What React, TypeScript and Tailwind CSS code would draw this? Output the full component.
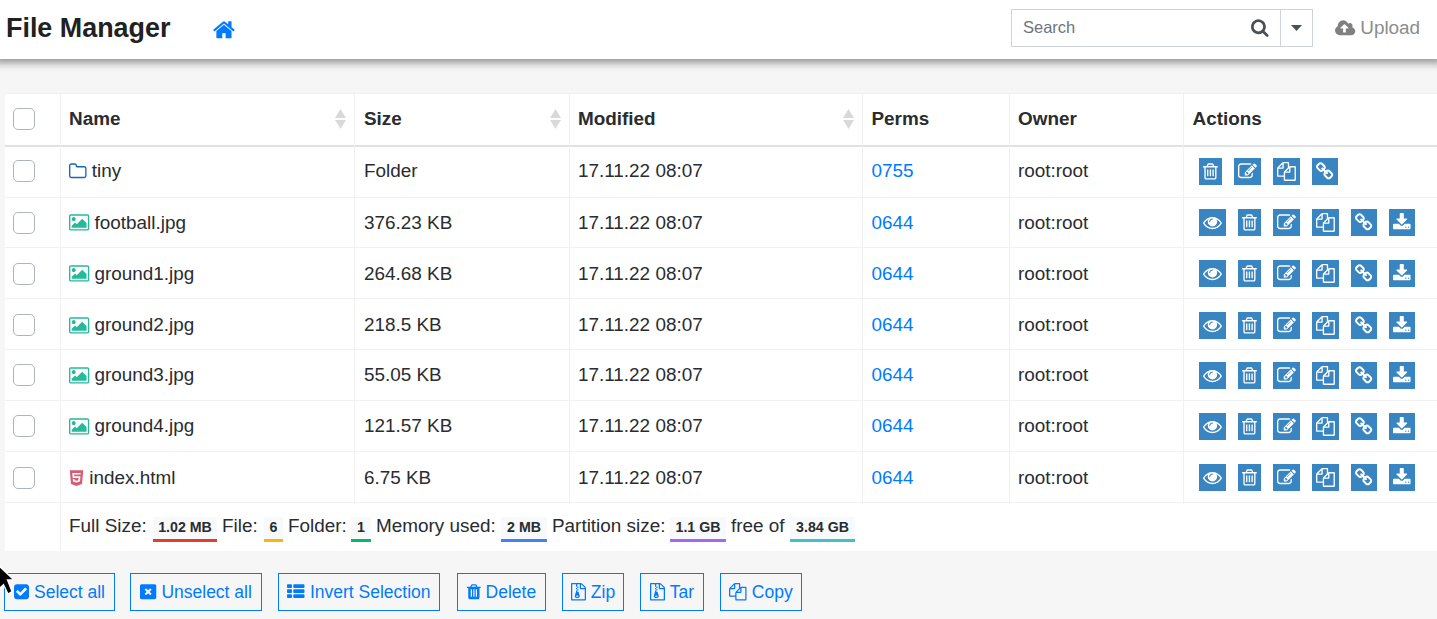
import { ReactNode } from "react";
import { FaHtml5 } from "react-icons/fa";

const TRASH_TOP =
  "M672 384h448l-48-117q-7-9-17-11h-317q-10 2-17 11zm928 32v64q0 14-9 23t-23 9h-96v948q0 83-47 143.5t-113 60.5h-832q-66 0-113-58.5t-47-141.5v-952h-96q-14 0-23-9t-9-23v-64q0-14 9-23t23-9h309l70-167q15-37 54-63t79-26h320q40 0 79 26t54 63l70 167h309q14 0 23 9t9 23z";

const glyphs = {
  home: "M1472 992v480q0 26-19 45t-45 19h-384v-384h-256v384h-384q-26 0-45-19t-19-45v-480q0-1 .5-3t.5-3l575-474 575 474q1 2 1 6zm223-69l-62 74q-8 9-21 11h-3q-13 0-21-7l-692-577-692 577q-12 8-24 7-13-2-21-11l-62-74q-8-10-7-23.5t11-21.5l719-599q32-26 76-26t76 26l244 204v-195q0-14 9-23t23-9h192q14 0 23 9t9 23v408l219 182q10 8 11 21.5t-7 23.5z",
  search:
    "M1216 832q0-185-131.5-316.5t-316.5-131.5-316.5 131.5-131.5 316.5 131.5 316.5 316.5 131.5 316.5-131.5 131.5-316.5zm512 832q0 52-38 90t-90 38q-54 0-90-38l-343-342q-179 124-399 124-143 0-273.5-55.5t-225-150-150-225-55.5-273.5 55.5-273.5 150-225 225-150 273.5-55.5 273.5 55.5 225 150 150 225 55.5 273.5q0 220-124 399l343 343q37 37 37 90z",
  cloud:
    "M1216 864q0-14-9-23l-352-352q-9-9-23-9t-23 9l-351 351q-10 12-10 24 0 14 9 23t23 9h224v352q0 13 9.5 22.5t22.5 9.5h192q13 0 22.5-9.5t9.5-22.5v-352h224q13 0 22.5-9.5t9.5-22.5zm640 288q0 159-112.5 271.5t-271.5 112.5h-1088q-185 0-316.5-131.5t-131.5-316.5q0-130 70-240t188-165q-2-30-2-43 0-212 150-362t362-150q156 0 285.5 87t188.5 231q71-62 166-62 106 0 181 75t75 181q0 76-41 138 130 31 213.5 135.5t83.5 238.5z",
  trashO:
    "M704 736v576q0 14-9 23t-23 9h-64q-14 0-23-9t-9-23v-576q0-14 9-23t23-9h64q14 0 23 9t9 23zm256 0v576q0 14-9 23t-23 9h-64q-14 0-23-9t-9-23v-576q0-14 9-23t23-9h64q14 0 23 9t9 23zm256 0v576q0 14-9 23t-23 9h-64q-14 0-23-9t-9-23v-576q0-14 9-23t23-9h64q14 0 23 9t9 23zm128 724v-948h-896v948q0 22 7 40.5t14.5 27 10.5 8.5h832q3 0 10.5-8.5t14.5-27 7-40.5z" +
    TRASH_TOP,
  trash:
    "M704 1376v-704q0-14-9-23t-23-9h-64q-14 0-23 9t-9 23v704q0 14 9 23t23 9h64q14 0 23-9t9-23zm256 0v-704q0-14-9-23t-23-9h-64q-14 0-23 9t-9 23v704q0 14 9 23t23 9h64q14 0 23-9t9-23zm256 0v-704q0-14-9-23t-23-9h-64q-14 0-23 9t-9 23v704q0 14 9 23t23 9h64q14 0 23-9t9-23z" +
    TRASH_TOP,
  edit: "M888 1184l116-116-152-152-116 116v56h96v96h56zm440-720q-16-16-33 1l-350 350q-17 17-1 33t33-1l350-350q17-17 1-33zm80 594v190q0 119-84.5 203.5t-203.5 84.5h-832q-119 0-203.5-84.5t-84.5-203.5v-832q0-119 84.5-203.5t203.5-84.5h832q63 0 117 25 15 7 18 23 3 17-9 29l-49 49q-14 14-32 8-23-6-45-6h-832q-66 0-113 47t-47 113v832q0 66 47 113t113 47h832q66 0 113-47t47-113v-126q0-13 9-22l64-64q15-15 35-7t20 29zm-96-738l288 288-672 672h-288v-288zm444 132l-92 92-288-288 92-92q28-28 68-28t68 28l152 152q28 28 28 68t-28 68z",
  copy: "M1696 384q40 0 68 28t28 68v1216q0 40-28 68t-68 28h-960q-40 0-68-28t-28-68v-288h-544q-40 0-68-28t-28-68v-672q0-40 20-88t48-76l408-408q28-28 76-48t88-20h416q40 0 68 28t28 68v328q68-40 128-40h416zm-544 213l-299 299h299v-299zm-640-384l-299 299h299v-299zm196 647l316-316v-416h-384v416q0 40-28 68t-68 28h-416v640h512v-256q0-40 20-88t48-76zm956 804v-1152h-384v416q0 40-28 68t-68 28h-416v640h896z",
  link: "M1520 1216q0-40-28-68l-208-208q-28-28-68-28-42 0-72 32 3 3 19 18.5t21.5 21.5 15 19 13 25.5 3.5 27.5q0 40-28 68t-68 28q-15 0-27.5-3.5t-25.5-13-19-15-21.5-21.5-18.5-19q-33 31-33 73 0 40 28 68l206 207q27 27 68 27 40 0 68-26l147-146q28-28 28-67zm-703-705q0-40-28-68l-206-207q-28-28-68-28-39 0-68 27l-147 146q-28 28-28 67 0 40 28 68l208 208q27 27 68 27 42 0 72-31-3-3-19-18.5t-21.5-21.5-15-19-13-25.5-3.5-27.5q0-40 28-68t68-28q15 0 27.5 3.5t25.5 13 19 15 21.5 21.5 18.5 19q33-31 33-73zm895 705q0 120-85 203l-147 146q-83 83-203 83-121 0-204-85l-206-207q-83-83-83-203 0-123 88-209l-88-88q-86 88-208 88-120 0-204-84l-208-208q-84-84-84-204t85-203l147-146q83-83 203-83 121 0 204 85l206 207q83 83 83 203 0 123-88 209l88 88q86-88 208-88 120 0 204 84l208 208q84 84 84 204z",
  download:
    "M1344 1344q0-26-19-45t-45-19-45 19-19 45 19 45 45 19 45-19 19-45zm256 0q0-26-19-45t-45-19-45 19-19 45 19 45 45 19 45-19 19-45zm128-224v320q0 40-28 68t-68 28h-1472q-40 0-68-28t-28-68v-320q0-40 28-68t68-28h465l135 136q58 56 136 56t136-56l136-136h464q40 0 68 28t28 68zm-325-569q17 41-14 70l-448 448q-18 19-45 19t-45-19l-448-448q-31-29-14-70 17-39 59-39h256v-448q0-26 19-45t45-19h256q26 0 45 19t19 45v448h256q42 0 59 39z",
  eye: "M1664 960q-152-236-381-353 61 104 61 225 0 185-131.5 316.5t-316.5 131.5-316.5-131.5-131.5-316.5q0-121 61-225-229 117-381 353 133 205 333.5 326.5t434.5 121.5 434.5-121.5 333.5-326.5zm-720-384q0-20-14-34t-34-14q-125 0-214.5 89.5t-89.5 214.5q0 20 14 34t34 14 34-14 14-34q0-86 61-147t147-61q20 0 34-14t14-34zm848 384q0 34-20 69-140 230-376.5 368.5t-499.5 138.5-499.5-139-376.5-368q-20-35-20-69t20-69q140-229 376.5-368t499.5-139 499.5 139 376.5 368q20 35 20 69z",
  folder:
    "M1600 1312v-704q0-40-28-68t-68-28h-704q-40 0-68-28t-28-68v-64q0-40-28-68t-68-28h-320q-40 0-68 28t-28 68v960q0 40 28 68t68 28h1216q40 0 68-28t28-68zm128-704v704q0 92-66 158t-158 66h-1216q-92 0-158-66t-66-158v-960q0-92 66-158t158-66h320q92 0 158 66t66 158v32h672q92 0 158 66t66 158z",
  picture:
    "M576 576q0 80-56 136t-136 56-136-56-56-136 56-136 136-56 136 56 56 136zm1024 384v448h-1408v-192l320-320 160 160 512-512zm96-704h-1600q-13 0-22.5 9.5t-9.5 22.5v1216q0 13 9.5 22.5t22.5 9.5h1600q13 0 22.5-9.5t9.5-22.5v-1216q0-13-9.5-22.5t-22.5-9.5zm160 32v1216q0 66-47 113t-113 47h-1600q-66 0-113-47t-47-113v-1216q0-66 47-113t113-47h1600q66 0 113 47t47 113z",
  check:
    "M813 1299l614-614q19-19 19-45t-19-45l-102-102q-19-19-45-19t-45 19l-467 467-211-211q-19-19-45-19t-45 19l-102 102q-19 19-19 45t19 45l358 358q19 19 45 19t45-19zm851-883v960q0 119-84.5 203.5t-203.5 84.5h-960q-119 0-203.5-84.5t-84.5-203.5v-960q0-119 84.5-203.5t203.5-84.5h960q119 0 203.5 84.5t84.5 203.5z",
  close:
    "M224 128h1344q66 0 113 47t47 113v1216q0 66-47 113t-113 47h-1344q-66 0-113-47t-47-113v-1216q0-66 47-113t113-47zM1230 1085L1041 896 1230 707q20-22 0-44L1129 562q-22-20-44 0L896 751 707 562q-22-20-44 0L562 663q-20 22 0 44L751 896 562 1085q-20 22 0 44L663 1230q22 20 44 0L896 1041 1085 1230q22 20 44 0L1230 1129q20-22 0-44z",
  list: "M96 128h320q96 0 96 96v192q0 96-96 96h-320q-96 0-96-96v-192q0-96 96-96zM96 640h320q96 0 96 96v192q0 96-96 96h-320q-96 0-96-96v-192q0-96 96-96zM96 1152h320q96 0 96 96v192q0 96-96 96h-320q-96 0-96-96v-192q0-96 96-96zM736 128h960q96 0 96 96v192q0 96-96 96h-960q-96 0-96-96v-192q0-96 96-96zM736 640h960q96 0 96 96v192q0 96-96 96h-960q-96 0-96-96v-192q0-96 96-96zM736 1152h960q96 0 96 96v192q0 96-96 96h-960q-96 0-96-96v-192q0-96 96-96z",
  archive:
    "M1596 380q28 28 48 76t20 88v1152q0 40-28 68t-68 28h-1344q-40 0-68-28t-28-68v-1600q0-40 28-68t68-28h896q40 0 88 20t76 48zM1152 136v376h376q-10-29-22-41l-313-313q-12-12-41-22zM1536 1664v-1024h-416q-40 0-68-28t-28-68v-416h-256v128h-128v-128h-384v1536zM640 256h128v128h-128zM768 384h128v128h-128zM640 512h128v128h-128zM768 640h128v128h-128zM640 768h128v128h130l108 350q18 50 18 98 0 83-73 138t-183 54-183-54-73-138q0-48 21-98 21-63 107-350zM768 1280q-128 0-128 64t128 64 128-64-128-64z",
};

type GlyphName = keyof typeof glyphs;

const boxes: Record<GlyphName, [number, number]> = {
  home: [64, 1664],
  search: [64, 1664],
  cloud: [-64, 1920],
  trashO: [192, 1408],
  trash: [192, 1408],
  edit: [0, 1792],
  copy: [0, 1792],
  link: [80, 1664],
  download: [64, 1664],
  eye: [0, 1792],
  folder: [64, 1664],
  picture: [-64, 1920],
  check: [128, 1536],
  close: [64, 1664],
  list: [0, 1792],
  archive: [128, 1536],
};

function Glyph({ name, size = 18.9, className = "" }: { name: GlyphName; size?: number; className?: string }) {
  const [x, w] = boxes[name];
  return (
    <svg
      className={`block shrink-0 overflow-visible ${className}`}
      width={(w / 1792) * size}
      height={size}
      viewBox={`${x} 0 ${w} 1792`}
      fill="currentColor"
      fillRule={name === "archive" || name === "close" ? "evenodd" : "nonzero"}
      aria-hidden="true"
    >
      <path d={glyphs[name]} />
    </svg>
  );
}

const actionWidths: Partial<Record<GlyphName, string>> = {
  eye: "w-[27px]",
  trashO: "w-[23px]",
  edit: "w-[27px]",
  copy: "w-[27px]",
  link: "w-[26px]",
  download: "w-[26px]",
};

function Actions({ folder }: { folder: boolean }) {
  const names: GlyphName[] = folder
    ? ["trashO", "edit", "copy", "link"]
    : ["eye", "trashO", "edit", "copy", "link", "download"];
  return (
    <div className="flex gap-[12px] pl-[6px]">
      {names.map((n) => (
        <a key={n} className={`flex h-[27px] items-center justify-center bg-[#3885c1] text-white ${actionWidths[n]}`}>
          <Glyph name={n} />
        </a>
      ))}
    </div>
  );
}

function Checkbox() {
  return <span className="block size-[22px] rounded-[5px] border border-[#adb5bd] bg-white" />;
}

function Sort() {
  return (
    <svg className="block" width="11" height="20" viewBox="0 0 11 20" fill="#d9d9d9" aria-hidden="true">
      <path d="M5.5 0L11 9H0zM0 11h11L5.500 20z" />
    </svg>
  );
}

type Row = { name: string; size: string; perms: string; kind: "folder" | "image" | "html"; h: string };

const rows: Row[] = [
  { name: "tiny", size: "Folder", perms: "0755", kind: "folder", h: "h-[51px] pb-[2px]" },
  { name: "football.jpg", size: "376.23 KB", perms: "0644", kind: "image", h: "h-[50px]" },
  { name: "ground1.jpg", size: "264.68 KB", perms: "0644", kind: "image", h: "h-[51px] pt-px" },
  { name: "ground2.jpg", size: "218.5 KB", perms: "0644", kind: "image", h: "h-[51px] pt-[2px]" },
  { name: "ground3.jpg", size: "55.05 KB", perms: "0644", kind: "image", h: "h-[51px]" },
  { name: "ground4.jpg", size: "121.57 KB", perms: "0644", kind: "image", h: "h-[51px]" },
  { name: "index.html", size: "6.75 KB", perms: "0644", kind: "html", h: "h-[51px] pt-px" },
];

const cols = "grid grid-cols-[56px_294px_215px_293px_147px_174px_1fr]";

function Cell({ children, last = false, pad = "pl-[8px]" }: { children?: ReactNode; last?: boolean; pad?: string }) {
  return (
    <div
      className={`-my-[2px] flex items-center whitespace-nowrap ${pad} ${last ? "" : "border-r border-[#f1f1f1]"}`}
    >
      {children}
    </div>
  );
}

const headings = [
  { label: "Name", sort: true, pad: "pl-[8px]" },
  { label: "Size", sort: true, pad: "pl-[9px]" },
  { label: "Modified", sort: true, pad: "pl-[8px]" },
  { label: "Perms", sort: false, pad: "pl-[8.500px]" },
  { label: "Owner", sort: false, pad: "pl-[8px]" },
  { label: "Actions", sort: false, pad: "pl-[8.500px]" },
];

const stats = [
  { label: "Full Size:", value: "1.02 MB", lw: "w-[84px]", bw: "w-[64px]", color: "border-[#e03f2c]" },
  { label: "File:", value: "6", lw: "w-[42px]", bw: "w-[19px]", color: "border-[#fbb40b]" },
  { label: "Folder:", value: "1", lw: "w-[63px]", bw: "w-[20px]", color: "border-[#04b968]" },
  { label: "Memory used:", value: "2 MB", lw: "w-[125px]", bw: "w-[46px]", color: "border-[#4180f8]" },
  { label: "Partition size:", value: "1.1 GB", lw: "w-[118px]", bw: "w-[56px]", color: "border-[#a266f8]" },
  { label: "free of", value: "3.84 GB", lw: "w-[59px]", bw: "w-[65px]", color: "border-[#3fc0cb]" },
];

const buttons: { icon: GlyphName; label: string; w: string }[] = [
  { icon: "check", label: "Select all", w: "w-[111px]" },
  { icon: "close", label: "Unselect all", w: "w-[132px] -ml-px" },
  { icon: "list", label: "Invert Selection", w: "w-[162px]" },
  { icon: "trash", label: "Delete", w: "w-[89px] ml-px" },
  { icon: "archive", label: "Zip", w: "w-[62px]" },
  { icon: "archive", label: "Tar", w: "w-[64px]" },
  { icon: "copy", label: "Copy", w: "w-[82px]" },
];

export default function App() {
  return (
    <div className="relative h-[619px] w-[1437px] overflow-hidden bg-[#f6f6f6] font-['Liberation_Sans',Arial,sans-serif] text-[18.9px] leading-[24px] text-[#292c30]">
      <header className="flex h-[59px] items-center bg-white pb-[3px] pl-[6px] shadow-[0_-2px_8px_6px_rgba(0,0,0,0.4)]">
        <h1 className="w-[207px] text-[26.9px] leading-[32px] font-bold whitespace-nowrap text-[#212121]">
          File Manager
        </h1>
        <Glyph name="home" size={23.6} className="mt-[3px] text-[#007bff]" />
        <div className="ml-auto flex h-[38px] w-[302px] border border-[#ced4da] text-[#495057]">
          <span className="flex-1 pl-[11px] text-[16.5px] leading-[35px] text-[#6c757d]">Search</span>
          <span className="flex w-[41px] items-center justify-center pb-px">
            <Glyph name="search" />
          </span>
          <span className="flex w-[32px] items-center justify-center border-l border-[#ced4da]">
            <svg width="11" height="6" viewBox="0 0 11 6" fill="currentColor" aria-hidden="true">
              <path d="M0 0h11L5.500 6z" />
            </svg>
          </span>
        </div>
        <a className="ml-[22px] flex w-[102px] items-center gap-[5px] text-[#808080]">
          <Glyph name="cloud" />
          <span className="text-[#8c8c8c]">Upload</span>
        </a>
      </header>

      <main className="pt-[34px] pl-[5px]">
        <div className="border-t border-[#f1f1f1] bg-white">
          <div className={`${cols} h-[53px] border-b-[2px] border-[#dee2e6] pb-[2px] font-bold`}>
            <Cell>
              <Checkbox />
            </Cell>
            {headings.map((h, i) => (
              <Cell key={h.label} last={i === 5} pad={h.pad}>
                {h.label}
                {h.sort && (
                  <span className="mr-[8px] ml-auto">
                    <Sort />
                  </span>
                )}
              </Cell>
            ))}
          </div>
          {rows.map((r) => (
            <div key={r.name} className={`${cols} ${r.h} border-b border-[#f1f1f1]`}>
              <Cell>
                <Checkbox />
              </Cell>
              <Cell>
                <span className="flex items-center gap-[5.3px]">
                  {r.kind === "folder" && <Glyph name="folder" className="text-[#1565c0]" />}
                  {r.kind === "image" && <Glyph name="picture" className="text-[#26b99a]" />}
                  {r.kind === "html" && <FaHtml5 className="h-[18px] w-[15px] text-[#d75e72]" />}
                  {r.name}
                </span>
              </Cell>
              <Cell pad="pl-[9px]">{r.size}</Cell>
              <Cell>17.11.22 08:07</Cell>
              <Cell pad="pl-[8.500px]">
                <a className="text-[#007bff]">{r.perms}</a>
              </Cell>
              <Cell>root:root</Cell>
              <Cell last pad="pl-[9px]">
                <Actions folder={r.kind === "folder"} />
              </Cell>
            </div>
          ))}
          <div className="flex h-[48px]">
            <div className="w-[56px] border-r border-[#f1f1f1]" />
            <div className="flex pt-[11px] pl-[8px] whitespace-nowrap">
              {stats.map((s) => (
                <div key={s.label} className="mr-[5px] flex">
                  <span className={s.lw}>{s.label}</span>
                  <span
                    className={`mt-[3px] h-[25px] border-b-[3px] bg-[#f8f9fa] text-center text-[14.2px] leading-[21px] font-bold ${s.bw} ${s.color}`}
                  >
                    {s.value}
                  </span>
                </div>
              ))}
            </div>
          </div>
        </div>
        <div className="mt-[22px] -ml-px flex gap-[16px] text-[17.500px]">
          {buttons.map((b) => (
            <button
              key={b.label}
              className={`flex h-[38px] items-center justify-center gap-[5px] border border-[#007bff] whitespace-nowrap text-[#007bff] ${b.w}`}
            >
              <Glyph name={b.icon} size={17.5} />
              {b.label}
            </button>
          ))}
        </div>
      </main>

      <svg className="absolute top-[563px] left-0" width="18" height="36" viewBox="0 0 18 36" aria-hidden="true">
        <path d="M-5 -1L14 17H7.500L12 28.500 8 31 3.500 21.500-5 30z" fill="#000" stroke="#fff" strokeWidth="1.300" />
      </svg>
    </div>
  );
}
